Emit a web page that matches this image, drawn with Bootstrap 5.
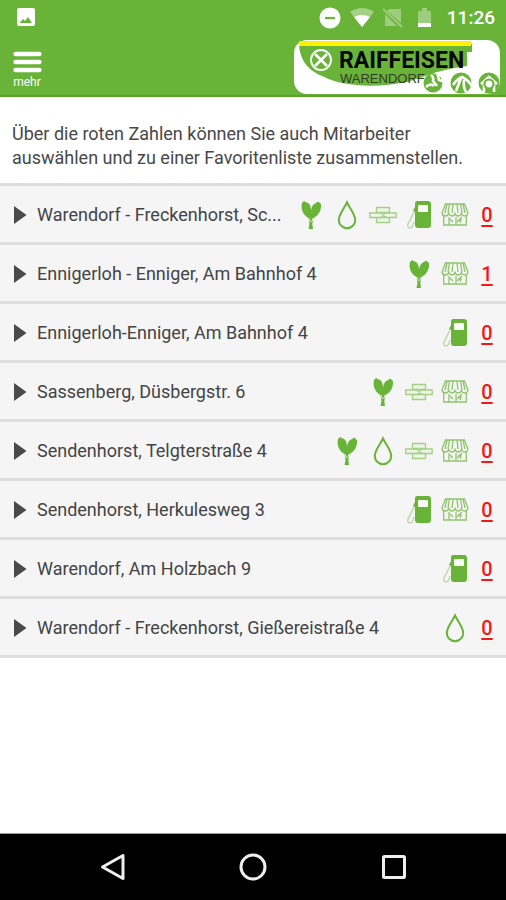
<!DOCTYPE html>
<html lang="de">
<head>
<meta charset="utf-8">
<meta name="viewport" content="width=device-width, initial-scale=1">
<title>Raiffeisen Warendorf – Standorte</title>
<link href="https://cdn.jsdelivr.net/npm/bootstrap@5.3.0/dist/css/bootstrap.min.css" rel="stylesheet">
<style>
:root { --leaf: #69b338; }
body { font-family: Roboto, sans-serif; color: #333; }
.app-top { background: var(--leaf); border-bottom: 2px solid #58a51f; }
.status-row { height: 36px; padding: 0 11px 0 17px; }
.clock { font-size: 19px; line-height: 24px; font-weight: 500; }
.brand-row { padding: 3px 6px 1px 12px; }
.menu-btn { font-size: 12px; line-height: 14px; }
.intro { font-size: 18px; line-height: 24px; color: #484848; padding: 25px 12px 13px; }
.sites { border-top: 3px solid #dedede; }
.site { background: #f5f5f5; border-bottom: 3px solid #dedede; height: 59px; padding: 2px 12px 0 14px; }
.site-name { font-size: 18px; line-height: 24px; color: #444; gap: 10px; }
.services { gap: 8px; color: var(--leaf); }
.count { font-size: 20px; line-height: 24px; font-weight: 500; color: #f01818; width: 14px; margin-left: 3px; text-underline-offset: 3px; }
.count:hover { color: #b00; }
.sysbar { height: 67px; border-top: 1px solid #999; padding: 0 98px; }
.logo-main { font: bold 23px Roboto, sans-serif; }
.logo-sub { font: 13px "Liberation Sans", sans-serif; }
</style>
<script src="https://cdn.jsdelivr.net/npm/bootstrap@5.3.0/dist/js/bootstrap.bundle.min.js"></script>
</head>
<body class="bg-white">
<svg class="d-none" aria-hidden="true">
  <symbol id="arrow" viewBox="0 0 13 20"><path d="M0 1 12.500 10 0 19Z" fill="#4a4a4a"/></symbol>
  <symbol id="seed" viewBox="0 0 28 30"><path d="M11.500 18C6 15 3.500 9 5 3l2-2 2.500 1.500C13 3 14 7 14 10.500 14.500 7 16 4 19 3l2-1.500L24 4c.5 6-2 11-7.500 14L15.300 24l.7 5h-4.500l1-5Z" fill="currentColor"/><path d="m12 18 1.500 4M16 18l-1.300 4" stroke="#d9edcb" stroke-width="1"/></symbol>
  <symbol id="drop" viewBox="0 0 28 30"><path d="M14 2.500C11.500 8 5.800 14 5.800 20a8.200 8.200 0 0 0 16.400 0C22.200 14 16.500 8 14 2.500Z" fill="none" stroke="currentColor" stroke-width="2"/></symbol>
  <symbol id="feed" viewBox="0 0 28 30"><g fill="#edf5e7" stroke="#a5cf87" stroke-width="1.300"><path d="M7.500 7.500h13v5h-13ZM7.500 17.500h13v5h-13Z"/><path d="M.700 13h10l3 1.500 3.500-1.500h10v4.500h-9l-3.500-1.500-3 1.500h-11Z"/></g></symbol>
  <symbol id="fuel" viewBox="0 0 28 30"><path d="M12 1h11q3 0 3 3v21q0 3-3 3H13q-3 0-3-3V12l-2-1 2-4V4q0-3 2-3Z" fill="currentColor"/><rect x="13" y="5" width="10" height="7" rx="1" fill="#f7faf5"/><path d="m9 12-6 12q-1 4 2 4c3 0 3-3 4-6" fill="none" stroke="#b5d79c" stroke-width="1.300"/></symbol>
  <symbol id="shop" viewBox="0 0 28 30"><g fill="none" stroke="#8fc46c" stroke-width="1.300"><path d="M4.500 4h19l3.500 9q-.5 3-3.300 3t-3.200-2.500Q19.500 16 17.200 16T14 13.500Q13.200 16 11 16t-3.200-2.500Q7 16 4.300 16T1 13Z"/><path d="m8.500 4-1.500 9M12 4l-1 9M16 4l1 9M19.500 4l1.500 9M6 4l-2 9M22 4l2 9M2.700 16v9h22.600v-9M8 17v8M15 17v8M21 17l-5 5M9 19l3 3M17 20h3l-1 3"/></g></symbol>
</svg>
<div class="d-flex flex-column min-vh-100">
  <header class="app-top text-white">
    <div class="status-row d-flex align-items-center justify-content-between">
      <svg width="18" height="20" viewBox="0 0 18 20" role="img" aria-label="Bild"><rect width="18" height="18" rx="2" fill="#fff"/><path d="m2.500 15 3.500-4 2 2 3-4 4 6Z" fill="#69b338"/></svg>
      <div class="d-flex align-items-center">
        <svg width="128" height="24" viewBox="0 0 128 24" role="img" aria-label="Nicht stören, WLAN, keine SIM, Akku">
          <circle cx="11" cy="12" r="10.500" fill="#fff"/><path d="M6 12h10" stroke="#69b338" stroke-width="2.200"/>
          <path d="M31 6q12-8 24 0L43 21Z" fill="#fff" opacity=".4"/><path d="M35 11q8-4 16 0l-8 10Z" fill="#fff"/>
          <g opacity=".35"><path d="M70 3h12v14L68 5ZM66 8l12 12H66Z" fill="#fff"/><path d="m64 3 19 18" stroke="#fff" stroke-width="2"/></g>
          <path d="M99 5h4V2h5v3h4v12H99Z" fill="#fff" opacity=".35"/><path d="M99 17h13v4H99Z" fill="#fff"/>
        </svg>
        <span class="clock">11:26</span>
      </div>
    </div>
    <div class="brand-row d-flex justify-content-between align-items-start">
      <button type="button" class="menu-btn btn border-0 p-0 text-white d-flex flex-column align-items-center mt-2 pt-1">
        <svg width="30" height="24" viewBox="0 0 30 24" aria-hidden="true"><path d="M3.500 3h24M3.500 11h24M3.500 19h24" stroke="#fff" stroke-width="4.300" stroke-linecap="round"/></svg>
        <span>mehr</span>
      </button>
      <a href="#" aria-label="Raiffeisen Warendorf">
        <svg class="d-block" width="206" height="55" viewBox="0 0 206 55">
          <rect width="206" height="54" y="1" rx="13" fill="#fff"/>
          <path d="M5 5h173v8h-5v14c-30 4-42 11-60 16-30 6-65 5-85-6C12 30 6 20 5 5Z" fill="#69b338"/>
          <path d="M5 2h172v5H5Z" fill="#fff200"/>
          <circle cx="27" cy="21" r="10" fill="none" stroke="#fff" stroke-width="1.800"/><path d="m21 15 12 12m0-12-12 12" stroke="#fff" stroke-width="2.800"/>
          <text class="logo-main" x="45" y="29" fill="#080808">RAIFFEISEN</text>
          <text class="logo-sub" x="46" y="44" fill="#303b28">WARENDORF</text>
          <g fill="#69b338">
            <circle cx="139" cy="44" r="9.500"/><circle cx="167" cy="44" r="10.500"/><circle cx="195" cy="44" r="10.500"/>
          </g>
          <g fill="none" stroke="#fff" stroke-width="2.600">
            <path d="M137 36q3 2 2 6l4 5M143 33l2 8 6 2M132 48q4-4 8-1" />
            <path d="M159 46q5-7 9-8 6 3 10 9M167 39l-5 13M170 41q-1 7 2 12" />
            <path d="m187 45 8-7 8 7M190 43v10M200 43v10"/>
          </g>
          <circle cx="195" cy="45" r="4.500" fill="#fff" stroke="#69b338" stroke-width="2.200"/>
        </svg>
      </a>
    </div>
  </header>
  <main class="flex-grow-1">
    <p class="intro mb-0">Über die roten Zahlen können Sie auch Mitarbeiter auswählen und zu einer Favoritenliste zusammenstellen.</p>
    <ul class="sites list-unstyled mb-0" id="sites">
      <li class="site d-flex align-items-center justify-content-between"><button type="button" class="site-name btn border-0 p-0 d-flex align-items-center text-nowrap"><svg width="13" height="20" aria-hidden="true"><use href="#arrow"/></svg>Warendorf - Freckenhorst, Sc...</button><div class="services d-flex align-items-center"><svg width="28" height="30"><use href="#seed"/></svg><svg width="28" height="30"><use href="#drop"/></svg><svg width="28" height="30"><use href="#feed"/></svg><svg width="28" height="30"><use href="#fuel"/></svg><svg width="28" height="30"><use href="#shop"/></svg><a href="#" class="count text-center">0</a></div></li>
      <li class="site d-flex align-items-center justify-content-between"><button type="button" class="site-name btn border-0 p-0 d-flex align-items-center text-nowrap"><svg width="13" height="20" aria-hidden="true"><use href="#arrow"/></svg>Ennigerloh - Enniger, Am Bahnhof 4</button><div class="services d-flex align-items-center"><svg width="28" height="30"><use href="#seed"/></svg><svg width="28" height="30"><use href="#shop"/></svg><a href="#" class="count text-center">1</a></div></li>
      <li class="site d-flex align-items-center justify-content-between"><button type="button" class="site-name btn border-0 p-0 d-flex align-items-center text-nowrap"><svg width="13" height="20" aria-hidden="true"><use href="#arrow"/></svg>Ennigerloh-Enniger, Am Bahnhof 4</button><div class="services d-flex align-items-center"><svg width="28" height="30"><use href="#fuel"/></svg><a href="#" class="count text-center">0</a></div></li>
      <li class="site d-flex align-items-center justify-content-between"><button type="button" class="site-name btn border-0 p-0 d-flex align-items-center text-nowrap"><svg width="13" height="20" aria-hidden="true"><use href="#arrow"/></svg>Sassenberg, Düsbergstr. 6</button><div class="services d-flex align-items-center"><svg width="28" height="30"><use href="#seed"/></svg><svg width="28" height="30"><use href="#feed"/></svg><svg width="28" height="30"><use href="#shop"/></svg><a href="#" class="count text-center">0</a></div></li>
      <li class="site d-flex align-items-center justify-content-between"><button type="button" class="site-name btn border-0 p-0 d-flex align-items-center text-nowrap"><svg width="13" height="20" aria-hidden="true"><use href="#arrow"/></svg>Sendenhorst, Telgterstraße 4</button><div class="services d-flex align-items-center"><svg width="28" height="30"><use href="#seed"/></svg><svg width="28" height="30"><use href="#drop"/></svg><svg width="28" height="30"><use href="#feed"/></svg><svg width="28" height="30"><use href="#shop"/></svg><a href="#" class="count text-center">0</a></div></li>
      <li class="site d-flex align-items-center justify-content-between"><button type="button" class="site-name btn border-0 p-0 d-flex align-items-center text-nowrap"><svg width="13" height="20" aria-hidden="true"><use href="#arrow"/></svg>Sendenhorst, Herkulesweg 3</button><div class="services d-flex align-items-center"><svg width="28" height="30"><use href="#fuel"/></svg><svg width="28" height="30"><use href="#shop"/></svg><a href="#" class="count text-center">0</a></div></li>
      <li class="site d-flex align-items-center justify-content-between"><button type="button" class="site-name btn border-0 p-0 d-flex align-items-center text-nowrap"><svg width="13" height="20" aria-hidden="true"><use href="#arrow"/></svg>Warendorf, Am Holzbach 9</button><div class="services d-flex align-items-center"><svg width="28" height="30"><use href="#fuel"/></svg><a href="#" class="count text-center">0</a></div></li>
      <li class="site d-flex align-items-center justify-content-between"><button type="button" class="site-name btn border-0 p-0 d-flex align-items-center text-nowrap"><svg width="13" height="20" aria-hidden="true"><use href="#arrow"/></svg>Warendorf - Freckenhorst, Gießereistraße 4</button><div class="services d-flex align-items-center"><svg width="28" height="30"><use href="#drop"/></svg><a href="#" class="count text-center">0</a></div></li>
    </ul>
  </main>
  <nav class="sysbar bg-black d-flex align-items-center justify-content-between" aria-label="System">
    <button type="button" class="btn border-0 p-0" aria-label="Zurück"><svg class="d-block" width="28" height="28" viewBox="0 0 28 28"><path d="M25 2.500v23L4.500 14Z" fill="none" stroke="#eee" stroke-width="3" stroke-linejoin="round"/></svg></button>
    <button type="button" class="btn border-0 p-0" aria-label="Start"><svg class="d-block" width="28" height="28" viewBox="0 0 28 28"><circle cx="14" cy="14" r="12" fill="none" stroke="#eee" stroke-width="3"/></svg></button>
    <button type="button" class="btn border-0 p-0" aria-label="Übersicht"><svg class="d-block" width="28" height="28" viewBox="0 0 28 28"><rect x="3.500" y="3.500" width="21" height="21" rx="1" fill="none" stroke="#eee" stroke-width="3"/></svg></button>
  </nav>
</div>
</body>
</html>
